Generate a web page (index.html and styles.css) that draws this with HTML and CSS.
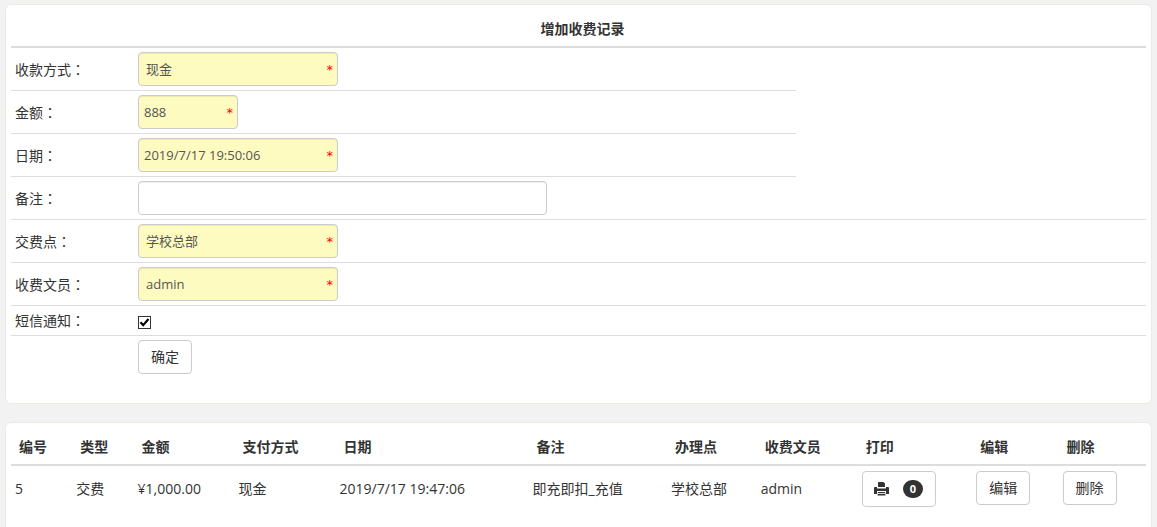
FILE: index.html
```html
<!DOCTYPE html>
<html lang="zh-CN">
<head>
<meta charset="utf-8">
<title>增加收费记录</title>
<link rel="stylesheet" href="styles.css">
</head>
<body>
<main class="page">
  <form class="panel panel-form">
    <table class="form-table">
      <colgroup><col class="col-label"><col class="col-field"><col class="col-rest"></colgroup>
      <thead>
        <tr><th colspan="3">增加收费记录</th></tr>
      </thead>
      <tbody>
        <tr>
          <td><label for="method">收款方式<span class="colon" lang="zh-TW">：</span></label></td>
          <td><div class="field"><select id="method" class="control required"><option>现金</option></select><span class="star">*</span></div></td>
        </tr>
        <tr>
          <td><label for="amount">金额<span class="colon" lang="zh-TW">：</span></label></td>
          <td><div class="field field-short"><input id="amount" type="text" class="control required" value="888"><span class="star">*</span></div></td>
        </tr>
        <tr>
          <td><label for="date">日期<span class="colon" lang="zh-TW">：</span></label></td>
          <td><div class="field"><input id="date" type="text" class="control required" value="2019/7/17 19:50:06"><span class="star">*</span></div></td>
        </tr>
        <tr>
          <td><label for="note">备注<span class="colon" lang="zh-TW">：</span></label></td>
          <td colspan="2"><div class="field field-long"><input id="note" type="text" class="control"></div></td>
        </tr>
        <tr>
          <td><label for="place">交费点<span class="colon" lang="zh-TW">：</span></label></td>
          <td colspan="2"><div class="field"><select id="place" class="control required"><option>学校总部</option></select><span class="star">*</span></div></td>
        </tr>
        <tr>
          <td><label for="clerk">收费文员<span class="colon" lang="zh-TW">：</span></label></td>
          <td colspan="2"><div class="field"><select id="clerk" class="control required"><option>admin</option></select><span class="star">*</span></div></td>
        </tr>
        <tr>
          <td><label for="sms">短信通知<span class="colon" lang="zh-TW">：</span></label></td>
          <td colspan="2"><div class="check"><input id="sms" type="checkbox" checked><svg viewBox="0 0 13 13" aria-hidden="true"><path d="M2.5 6.2 5.2 9.2 10.5 3" fill="none" stroke="#000" stroke-width="2.2"/></svg></div></td>
        </tr>
        <tr>
          <td></td>
          <td colspan="2"><button type="submit" class="btn">确定</button></td>
        </tr>
      </tbody>
    </table>
  </form>

  <section class="panel panel-list">
    <table class="list-table">
      <colgroup>
        <col class="c-id"><col class="c-type"><col class="c-sum"><col class="c-pay"><col class="c-date"><col class="c-note"><col class="c-place"><col class="c-clerk"><col class="c-print"><col class="c-edit"><col class="c-del">
      </colgroup>
      <thead>
        <tr><th>编号</th><th>类型</th><th>金额</th><th>支付方式</th><th>日期</th><th>备注</th><th>办理点</th><th>收费文员</th><th>打印</th><th>编辑</th><th>删除</th></tr>
      </thead>
      <tbody>
        <tr>
          <td>5</td><td>交费</td><td>¥1,000.00</td><td>现金</td><td>2019/7/17 19:47:06</td><td>即充即扣_充值</td><td>学校总部</td><td>admin</td>
          <td><button type="button" class="btn btn-print" aria-label="打印"><svg class="print-icon" viewBox="0 0 15 15" aria-hidden="true"><path fill="#333" d="M4.500 0h5l1.500 1.500V5h-7V0.500z M0.500 5h2.500v1.500h9V5h2.500l0.500 1v6h-3V9H3v3H0V6z M4 10h7l0.500 3.500h-8z"/><path d="M4 11.500h7" stroke="#fff" stroke-width="0.800"/></svg><span class="badge">0</span></button></td>
          <td><button type="button" class="btn">编辑</button></td>
          <td><button type="button" class="btn">删除</button></td>
        </tr>
      </tbody>
    </table>
  </section>
</main>
</body>
</html>
```
FILE: styles.css
```css
* { box-sizing: border-box; }
body {
  margin: 0;
  background: #f2f2f2;
  color: #333;
  font: 14px/20px "Open Sans", "Noto Sans CJK SC", sans-serif;
}
.page {
  display: flex;
  flex-direction: column;
  gap: 18px;
  min-height: 100vh;
  padding: 4px 5px 0;
}
.panel {
  background: #fff;
  border: 1px solid #ebebe3;
  border-radius: 6px;
  padding: 5px;
}
.panel-form { padding-bottom: 25px; }
.panel-list {
  flex: 1;
  padding-bottom: 0;
  border-bottom: 0;
  border-radius: 6px 6px 0 0;
}
table {
  width: 100%;
  table-layout: fixed;
  border-collapse: separate;
  border-spacing: 0;
}
th, td { text-align: left; white-space: nowrap; }
th {
  padding: 9px 0 7px 8px;
  border-bottom: 2px solid #ddd;
  font-weight: 700;
}
.form-table th { text-align: center; }
.form-table td {
  padding: 4px;
  border-bottom: 1px solid #ddd;
}
.form-table tr:last-child td { border-bottom: 0; }
.col-label { width: 123px; }
.col-rest { width: 350px; }
.colon { font-family: "Noto Sans CJK TC", sans-serif; }
label { display: block; }

.field { position: relative; width: 200px; }
.field-short { width: 100px; }
.field-long { width: 409px; }
.control {
  display: block;
  width: 100%;
  height: 34px;
  margin: 0;
  padding: 0 5px;
  border: 1px solid #ccc;
  border-radius: 4px;
  background: #fff;
  box-shadow: inset 0 1px 1px rgba(0, 0, 0, 0.075);
  color: #555;
  font: inherit;
  font-size: 13px;
}
select.control { appearance: none; padding-left: 7px; }
.required { background: #fdfbc0; }
.star {
  position: absolute;
  top: 8px;
  right: 5px;
  color: #f00;
  font-family: "DejaVu Sans", sans-serif;
  font-size: 13px;
  pointer-events: none;
}
.check { display: grid; width: 13px; height: 13px; margin-top: 4px; }
.check input, .check svg { grid-area: 1 / 1; width: 13px; height: 13px; }
.check input {
  appearance: none;
  margin: 0;
  border: 1px solid #333;
  background: #fff;
}
.check svg { pointer-events: none; z-index: 1; }
.check input:not(:checked) + svg { display: none; }

.btn {
  display: inline-flex;
  align-items: center;
  height: 34px;
  padding: 0 12px;
  border: 1px solid #ccc;
  border-radius: 4px;
  background: #fff;
  color: #333;
  font: inherit;
  vertical-align: top;
}
.btn-print { height: 36px; padding-left: 11px; gap: 14px; }
.print-icon { width: 15px; height: 15px; }
.badge {
  padding: 3px 7px;
  border-radius: 10px;
  background: #333;
  color: #fff;
  font-size: 11px;
  font-weight: 700;
  line-height: 12px;
}

.list-table td { height: 46px; padding: 5px 4px; vertical-align: top; line-height: 36px; }
.list-table .btn { line-height: 20px; }
.c-id { width: 5.4%; }
.c-type { width: 5.4%; }
.c-sum { width: 8.9%; }
.c-pay { width: 8.9%; }
.c-date { width: 17%; }
.c-note { width: 12.2%; }
.c-place { width: 7.9%; }
.c-clerk { width: 8.9%; }
.c-print { width: 10.1%; }
.c-edit { width: 7.6%; }
.c-del { width: 7.7%; }
```
